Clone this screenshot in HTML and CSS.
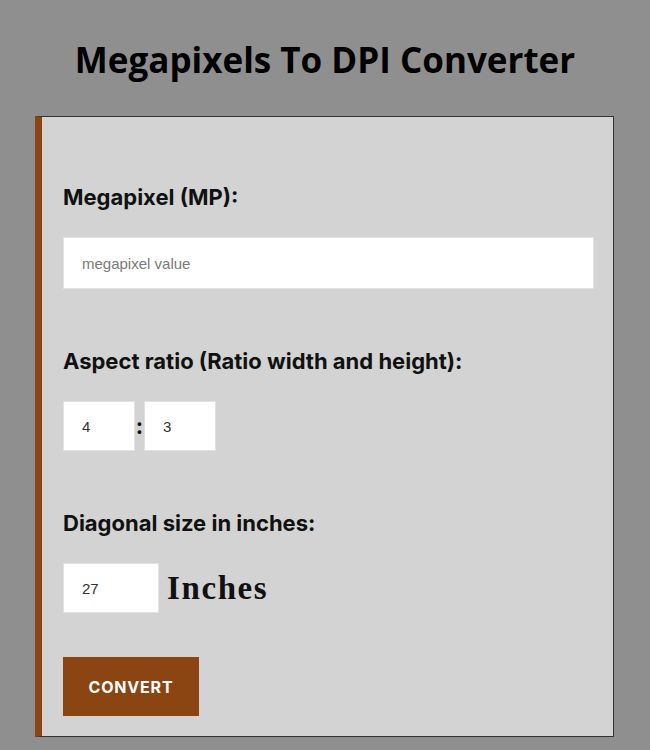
FILE: index.html
```html
<!DOCTYPE html>
<html lang="en">

<head>
    <title>Megapixels To DPI Converter</title>
    <meta charset="utf-8">
    <meta name="viewport" content="width=device-width, initial-scale=1">
    <link rel="stylesheet" href="styles.css">
</head>

<body>
    <h1 class="title">Megapixels To DPI Converter</h1>

    <div class="converter">
        <div class="field">
            <label for="mp">Megapixel (MP):</label>
            <input type="text" id="mp" class="wide" placeholder="megapixel value">
        </div>

        <div class="field">
            <label for="ratioW">Aspect ratio (Ratio width and height):</label>
            <div class="row">
                <input type="text" id="ratioW" class="small" value="4">
                <span class="colon">:</span>
                <input type="text" id="ratioH" class="small" value="3">
            </div>
        </div>

        <div class="field">
            <label for="diag">Diagonal size in inches:</label>
            <div class="row">
                <input type="text" id="diag" class="medium" value="27">
                <span class="unit">Inches</span>
            </div>
        </div>

        <button class="convert">CONVERT</button>
    </div>
</body>

</html>
```

FILE: styles.css
```css
* {
    box-sizing: border-box;
}

body {
    margin: 0;
    background-color: #8f8f8f;
    font-family: Inter, "Liberation Sans", sans-serif;
    color: #111;
}

.title {
    margin: 36px 0 33px;
    text-align: center;
    font-family: "Open Sans", "Noto Sans", sans-serif;
    font-size: 35px;
    font-weight: 700;
    color: #000;
}

/* Card */
.converter {
    width: 579px;
    margin-left: 35px;
    padding: 67px 19px 20px 21px;
    background-color: #d3d3d3;
    border: 1px solid #333;
    border-left: 7px solid #8b4513;
}

.field {
    margin-bottom: 59px;
}

.field label {
    display: block;
    margin-bottom: 27px;
    font-size: 22px;
    line-height: 26px;
    font-weight: 700;
}

.field input {
    height: 50px;
    padding: 0 18px;
    background-color: #fff;
    border: 1px solid #e2e2e2;
    font-family: "Liberation Sans", Arial, sans-serif;
    font-size: 15px;
    color: #333;
    outline: none;
}

.field input::placeholder {
    color: #7a7a7a;
}

.field input.wide {
    width: 531px;
    height: 52px;
}

.small {
    width: 72px;
}

.medium {
    width: 96px;
}

.row {
    display: flex;
    align-items: center;
}

.colon {
    width: 9px;
    text-align: center;
    font-size: 22px;
    font-weight: 700;
    line-height: 1;
}

.unit {
    margin-left: 8px;
    font-family: "Liberation Serif", "Times New Roman", serif;
    font-size: 33px;
    font-weight: 700;
    letter-spacing: 1.6px;
}

.convert {
    width: 136px;
    height: 59px;
    margin-top: -15px;
    background-color: #8b4513;
    border: none;
    color: #fff;
    font-family: Inter, "Liberation Sans", sans-serif;
    font-size: 16px;
    font-weight: 700;
    letter-spacing: 0.8px;
    cursor: pointer;
}
```
